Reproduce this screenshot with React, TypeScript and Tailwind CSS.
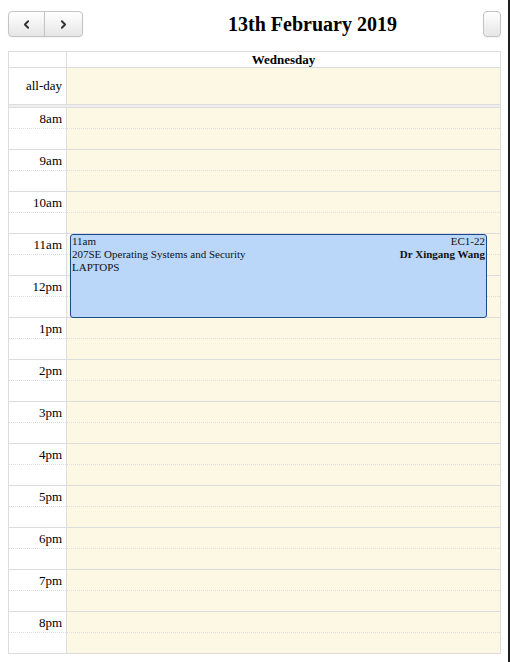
import { ChevronLeft, ChevronRight } from 'lucide-react';

const hours = ['8am', '9am', '10am', '11am', '12pm', '1pm', '2pm', '3pm', '4pm', '5pm', '6pm', '7pm', '8pm'];

const btn =
  'flex h-[26px] items-center justify-center border border-[#c4c4c4] bg-gradient-to-b from-white to-[#e6e6e6] text-[#333] shadow-[inset_0_1px_0_rgba(255,255,255,0.2),0_1px_2px_rgba(0,0,0,0.05)]';

function Toolbar() {
  return (
    <div className="flex h-[26px] items-center">
      <div className="flex">
        <button className={`${btn} w-[37px] rounded-l-[4px]`}>
          <ChevronLeft size={13} strokeWidth={3.5} />
        </button>
        <button className={`${btn} -ml-px w-[39px] rounded-r-[4px]`}>
          <ChevronRight size={13} strokeWidth={3.5} />
        </button>
      </div>
      <h2 className="ml-[145px] text-[20px] font-bold leading-none text-black">13th February 2019</h2>
      <button className={`${btn} ml-auto w-[18px] rounded-[4px]`} />
    </div>
  );
}

function HourRow({ label }: { label: string }) {
  return (
    <div className="flex">
      <div className="w-[58px] border-r border-[#ddd]">
        <div className="h-[21px] border-b border-dotted border-[#ddd] pr-[4px] text-right text-[13px] leading-[22px]">{label}</div>
        <div className="h-[21px] border-b border-[#ddd]" />
      </div>
      <div className="flex-1 bg-[#fcf8e3]">
        <div className="h-[21px] border-b border-dotted border-[#ddd]" />
        <div className="h-[21px] border-b border-[#ddd]" />
      </div>
    </div>
  );
}

export default function App() {
  return (
    <div className="flex min-h-[662px] bg-white text-black" style={{ fontFamily: '"Liberation Serif", "Times New Roman", serif' }}>
      <div className="w-[508px] pl-[8px] pt-[11px]">
        <div className="w-[493px]">
          <Toolbar />
          <div className="mt-[14px] border-x border-t border-[#ddd]">
            <div className="flex border-b border-[#ddd]">
              <div className="w-[58px] border-r border-[#ddd]" />
              <div className="h-[15px] flex-1 text-center text-[13px] font-bold leading-[16px]">Wednesday</div>
            </div>
            <div className="flex">
              <div className="flex h-[36px] w-[58px] items-center justify-end border-r border-[#ddd] pr-[4px] text-[13px]">all-day</div>
              <div className="flex-1 bg-[#fcf8e3]" />
            </div>
            <div className="h-[4px] border-y border-[#ddd] bg-[#eee]" />
            <div className="relative">
              {hours.map((h) => (
                <HourRow key={h} label={h} />
              ))}
              <div className="absolute left-[61px] top-[126px] h-[84px] w-[417px] rounded-[3px] border border-[#1b4a8a] bg-[#bad7fa] px-px text-[11px] leading-[13px] text-[#111]">
                <div className="flex justify-between">
                  <span>11am</span>
                  <span>EC1-22</span>
                </div>
                <div className="flex justify-between">
                  <span>207SE Operating Systems and Security</span>
                  <span className="font-bold">Dr Xingang Wang</span>
                </div>
                <div>LAPTOPS</div>
              </div>
            </div>
          </div>
        </div>
      </div>
      <div className="w-[2px] bg-[#1e1e1e]" />
    </div>
  );
}
